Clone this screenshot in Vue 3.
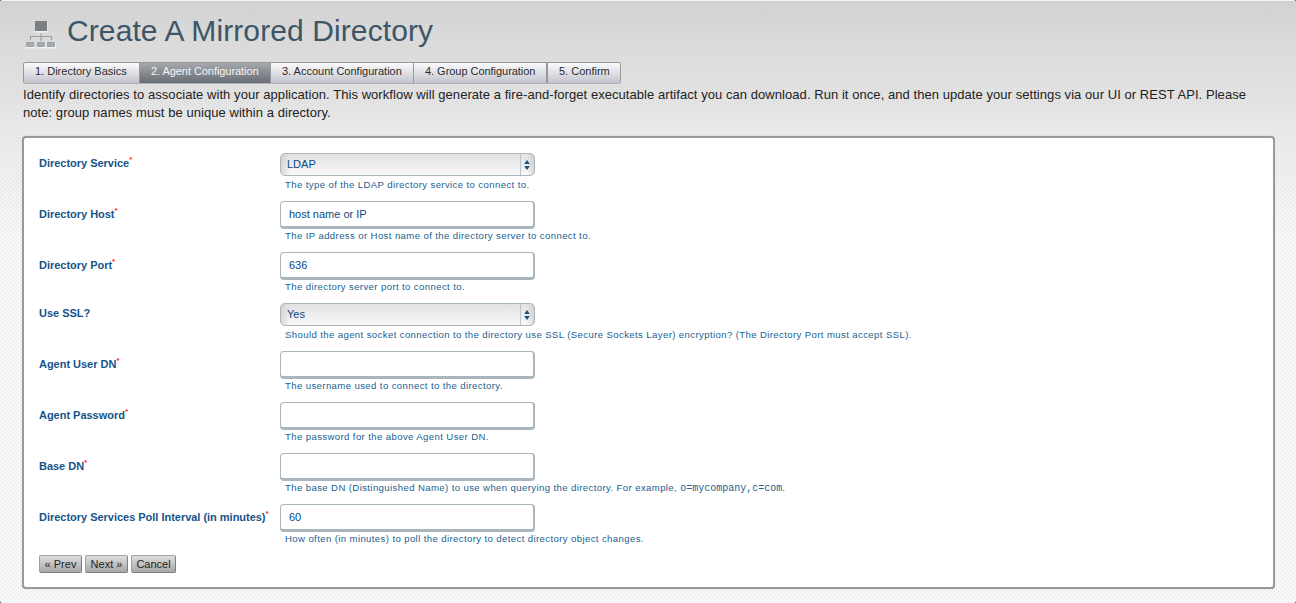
<script setup>
const steps = [
  { label: '1. Directory Basics', w: 116 },
  { label: '2. Agent Configuration', w: 131, active: true },
  { label: '3. Account Configuration', w: 143 },
  { label: '4. Group Configuration', w: 134, wide: true },
  { label: '5. Confirm', w: 72 },
]
const rows = [
  { label: 'Directory Service', req: true, type: 'select', value: 'LDAP', hint: 'The type of the LDAP directory service to connect to.' },
  { label: 'Directory Host', req: true, type: 'input', value: 'host name or IP', hint: 'The IP address or Host name of the directory server to connect to.' },
  { label: 'Directory Port', req: true, type: 'input', value: '636', hint: 'The directory server port to connect to.' },
  { label: 'Use SSL?', type: 'select', value: 'Yes', hint: 'Should the agent socket connection to the directory use SSL (Secure Sockets Layer) encryption? (The Directory Port must accept SSL).' },
  { label: 'Agent User DN', req: true, type: 'input', value: '', hint: 'The username used to connect to the directory.' },
  { label: 'Agent Password', req: true, type: 'input', value: '', hint: 'The password for the above Agent User DN.' },
  { label: 'Base DN', req: true, type: 'input', value: '', hint: 'The base DN (Distinguished Name) to use when querying the directory. For example, ', code: 'o=mycompany,c=com' },
  { label: 'Directory Services Poll Interval (in minutes)', req: true, type: 'input', value: '60', hint: 'How often (in minutes) to poll the directory to detect directory object changes.' },
]
</script>

<template>
  <main class="page">
    <header class="head">
      <svg class="logo" width="32" height="28" viewBox="0 0 32 28">
        <g fill="#f1f2f3">
          <rect x="9" y="1" width="12.5" height="10.5" />
          <rect x="0" y="22" width="9" height="5.5" /><rect x="11" y="22" width="9" height="5.5" /><rect x="21" y="22" width="9" height="5.5" />
        </g>
        <rect x="9" y="0" width="12" height="10" fill="#7a8083" />
        <path d="M15 12.500v7.500M4.500 19v-3.500h21v3.500" fill="none" stroke="#999fa4" stroke-width="1.2" />
        <g fill="#a6adb2" stroke="#9aa1a6" stroke-width="1">
          <rect x=".5" y="21.500" width="7.500" height="4" rx=".5" /><rect x="11.500" y="21.500" width="7" height="4" rx=".5" /><rect x="21.500" y="21.500" width="7" height="4" rx=".5" />
        </g>
      </svg>
      <h1>Create A Mirrored Directory</h1>
    </header>
    <nav class="steps">
      <span v-for="s in steps" :key="s.label" :class="['step', { active: s.active, wide: s.wide }]" :style="{ width: s.w + 'px' }">{{ s.label }}</span>
    </nav>
    <p class="intro">
      Identify directories to associate with your application. This workflow will generate a fire-and-forget executable artifact you can download. Run it once, and then update your settings via our UI or REST API. Please<br>
      note: group names must be unique within a directory.
    </p>
    <section class="panel">
      <div v-for="r in rows" :key="r.label" :class="['row', r.type]">
        <label>{{ r.label }}<sup v-if="r.req">*</sup></label>
        <div class="field">
          <div class="control"><span>{{ r.value }}</span>
            <i v-if="r.type === 'select'"><svg width="6" height="10" viewBox="0 0 6 10"><path d="M3 0L5.800 4H.2zM3 10L.2 6h5.600z" fill="#17517f" /></svg></i>
          </div>
          <p class="hint">{{ r.hint }}<template v-if="r.code"><code>{{ r.code }}</code>.</template></p>
        </div>
      </div>
      <div class="actions">
        <button class="prev">« Prev</button><button class="next">Next »</button><button class="cancel">Cancel</button>
      </div>
    </section>
  </main>
</template>

<style>
body { margin: 0; background: #0d3a5c; overflow: hidden; }
</style>
<style scoped>
.page {
  box-sizing: border-box; height: 603px; padding: 16px 21px 0 23px; border-top: 1px solid #f4f4f4; border-radius: 2px;
  font-family: "Liberation Sans", Arial, sans-serif; color: #222;
  background:
    linear-gradient(rgba(212,212,212,.5), rgba(222,222,222,.8) 60px, rgba(235,235,235,.3) 120px, transparent 200px),
    conic-gradient(from 270deg at 1px 1px, rgba(0,0,0,.12) 90deg, transparent 0) 0 0 / 4px 4px,
    conic-gradient(from 270deg at 1px 1px, rgba(0,0,0,.12) 90deg, transparent 0) 2px 2px / 4px 4px,
    linear-gradient(#d2d2d2, #dedede 65px, #efefef 150px, #f9f9f9 240px);
}
.head { display: flex; height: 45px; }
.logo { margin: 4px 0 0 3px; }
h1 { margin: -3px 0 0 9px; font-size: 30px; line-height: 34px; font-weight: 400; letter-spacing: .1px; color: #3d5566; white-space: nowrap; }
.steps { display: flex; width: 596px; height: 20px; border: 1px solid #989898; border-bottom-color: #b0b0b5; border-radius: 3px; overflow: hidden; }
.step { flex: none; box-sizing: border-box; padding-left: 11px; border-right: 1px solid #989898; font-size: 11px; line-height: 16px; color: #2b2b2b; background: linear-gradient(#fbfbfc, #dddde2 55%, #c2c3cd); white-space: nowrap; }
.step.wide { border-right-width: 2px; letter-spacing: -.04px; }
.step:last-child { border: 0; }
.step.active { color: #f4f4f4; letter-spacing: -.06px; background: linear-gradient(#a5a8ac, #686d74); }
.intro { margin: 2px 0 0; font-size: 13px; line-height: 18px; height: 51px; letter-spacing: .058px; white-space: nowrap; }
.panel { box-sizing: border-box; height: 453px; margin: -1px 0 0 -1px; padding: 15px 14px 0 15px; border: 2px solid #999; border-radius: 4px; background: #fff; box-shadow: 0 0 1px #aaa; }
.row { display: flex; height: 51px; color: #165488; }
.row.select { height: 48px; }
label { width: 241px; font-size: 11px; line-height: 14px; font-weight: 700; padding-top: 6px; box-sizing: border-box; letter-spacing: -.02px; white-space: nowrap; }
.select label { padding-top: 3px; }
sup { color: #f22; font-size: 8px; line-height: 0; vertical-align: 5px; font-weight: 700; }
.control { display: flex; align-items: center; box-sizing: border-box; width: 255px; height: 28px; padding: 0 0 0 8px; border: 1px solid #a9b6be; border-width: 1px 2px 3px 1px; border-radius: 4px; font-size: 11px; color: #0a4a80; }
.select .control { height: 23px; padding: 0 0 0 6px; border-width: 1px; border-radius: 5px; background: linear-gradient(90deg, rgba(195,195,195,.55), transparent 9px, transparent 246px, rgba(195,195,195,.6)), linear-gradient(#e2e2e2, #f8f8f8); }
.select .control span { padding-bottom: 1px; }
i { display: flex; align-items: center; justify-content: center; box-sizing: border-box; width: 14px; height: 21px; padding-right: 1px; margin-left: auto; border-left: 1px solid #c2c5c8; }
.hint { margin: 0 0 0 5px; font-size: 9.6px; line-height: 14px; white-space: nowrap; letter-spacing: .38px; color: #215f91; }
.select .hint { padding-top: 2px; }
code { font-family: "Liberation Mono", monospace; font-size: 10px; line-height: 1; letter-spacing: 0; }
.actions { display: flex; gap: 3px; }
button { box-sizing: border-box; height: 18px; padding: 0; border: 1px solid #a0a0a0; border-right-color: #7d7d7d; border-bottom-color: #7d7d7d; border-radius: 2px; font: 11px/16px "Liberation Sans", Arial, sans-serif; color: #222; background: linear-gradient(#dedede, #a8a8a8); white-space: nowrap; }
.prev, .next { width: 43px; }
.cancel { width: 45px; }
</style>
